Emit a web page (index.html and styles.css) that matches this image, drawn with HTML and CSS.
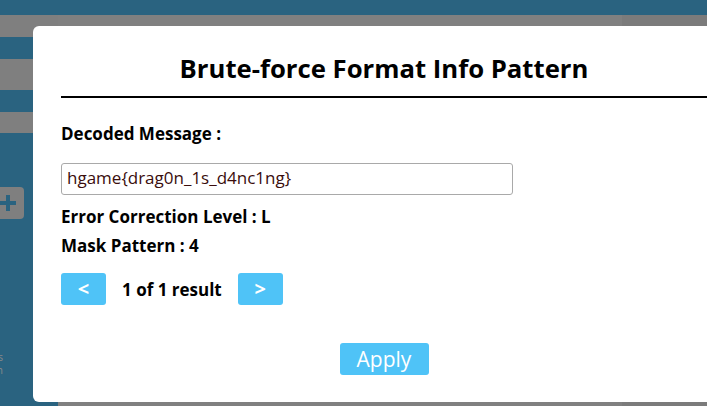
FILE: index.html
```html
<!DOCTYPE html>
<html lang="en">
<head>
<meta charset="utf-8">
<title>Brute-force Format Info Pattern</title>
<link rel="stylesheet" href="styles.css">
</head>
<body>
<div class="page">
  <header class="topbar"></header>
  <div class="workspace">
    <aside class="sidebar">
      <div class="stripe stripe-gray s1"></div>
      <div class="stripe stripe-teal s2"></div>
      <div class="stripe stripe-gray s3"></div>
      <div class="stripe stripe-teal s4"></div>
      <div class="stripe stripe-gray s5"></div>
      <div class="add-btn">
        <svg width="20" height="20" viewBox="0 0 20 20"><path d="M10 2v16M2 10h16" stroke="#2a6380" stroke-width="4" fill="none"/></svg>
      </div>
      <div class="side-label">Settings</div>
      <div class="side-label">Join</div>
    </aside>
    <main class="main">
      <div class="main-left"></div>
      <div class="main-right"></div>
    </main>
  </div>
</div>

<div class="modal">
  <h1 class="modal-title">Brute-force Format Info Pattern</h1>
  <hr class="modal-rule">
  <div class="field-label">Decoded Message :</div>
  <input class="message-input" type="text" value="hgame{drag0n_1s_d4nc1ng}">
  <div class="info-block">
    <div class="info-line">Error Correction Level : L</div>
    <div class="info-line">Mask Pattern : 4</div>
  </div>
  <div class="pager">
    <button class="pager-btn">&lt;</button>
    <span class="pager-text">1 of 1 result</span>
    <button class="pager-btn">&gt;</button>
  </div>
  <div class="actions">
    <button class="apply-btn">Apply</button>
  </div>
</div>
</body>
</html>
```
FILE: styles.css
```css
html, body {
  margin: 0;
  padding: 0;
  width: 707px;
  height: 406px;
  overflow: hidden;
  font-family: "Open Sans", "Noto Sans", sans-serif;
}

.page {
  display: flex;
  flex-direction: column;
  height: 406px;
  background: #808080;
}

.topbar {
  height: 15px;
  background: #2a6380;
  flex: none;
}

.workspace {
  display: flex;
  flex: 1;
}

.sidebar {
  width: 58px;
  flex: none;
  background: #2a6380;
  display: flex;
  flex-direction: column;
}

.stripe { flex: none; }
.stripe-gray { background: #7f7f7f; }
.stripe-teal { background: #2a6380; }
.s1 { height: 22px; }
.s2 { height: 22px; }
.s3 { height: 31px; }
.s4 { height: 22px; }
.s5 { height: 21px; }

.add-btn {
  margin-top: 54px;
  margin-left: -9px;
  width: 33px;
  height: 32px;
  border-radius: 4px;
  background: #7f7f7f;
  display: flex;
  align-items: center;
  justify-content: flex-end;
  padding-right: 6px;
  box-sizing: border-box;
}

.side-label {
  margin-left: -48px;
  width: 51px;
  text-align: right;
  font-size: 10px;
  line-height: 13px;
  color: #8a8a8a;
}

.add-btn + .side-label { margin-top: 132px; }

.main {
  flex: 1;
  display: flex;
}

.main-left {
  flex: 1;
  background: #808080;
}

.main-right {
  width: 85px;
  background: #7b7b7b;
}

.modal {
  position: fixed;
  top: 26px;
  left: 33px;
  width: 702px;
  box-sizing: border-box;
  padding: 25px 28px 27px;
  background: #fff;
  border-radius: 6px;
  color: #000;
}

.modal-title {
  margin: 0;
  font-size: 25.7px;
  line-height: 36px;
  font-weight: 700;
  text-align: center;
}

.modal-rule {
  margin: 9px 0 0;
  border: 0;
  border-top: 2px solid #000;
  height: 0;
}

.field-label {
  margin-top: 24px;
  font-size: 17px;
  line-height: 24px;
  font-weight: 700;
}

.message-input {
  display: block;
  margin-top: 17px;
  width: 452px;
  height: 32px;
  box-sizing: border-box;
  padding: 0 4px 4px 5px;
  border: 1px solid #a9a9a9;
  border-radius: 3px;
  font-family: "Open Sans", sans-serif;
  font-size: 17px;
  color: #3a0d0d;
  background: #fff;
  outline: none;
}

.info-block { margin-top: 7px; }

.info-line {
  font-size: 17px;
  line-height: 29px;
  font-weight: 700;
}

.pager {
  margin-top: 13px;
  display: flex;
  align-items: center;
  gap: 16px;
}

.pager-btn {
  width: 45px;
  height: 32px;
  border: 0;
  border-radius: 3px;
  background: #4fc3f7;
  color: #fff;
  font-family: "Open Sans", sans-serif;
  font-weight: 700;
  font-size: 20px;
  line-height: 32px;
  padding: 0;
}

.pager-text {
  font-size: 17px;
  font-weight: 700;
}

.actions {
  margin-top: 38px;
  display: flex;
  justify-content: center;
}

.apply-btn {
  width: 89px;
  height: 32px;
  border: 0;
  border-radius: 3px;
  background: #4fc3f7;
  color: #fff;
  font-family: "Open Sans", sans-serif;
  font-size: 21px;
  line-height: 32px;
  padding: 0;
}
```
